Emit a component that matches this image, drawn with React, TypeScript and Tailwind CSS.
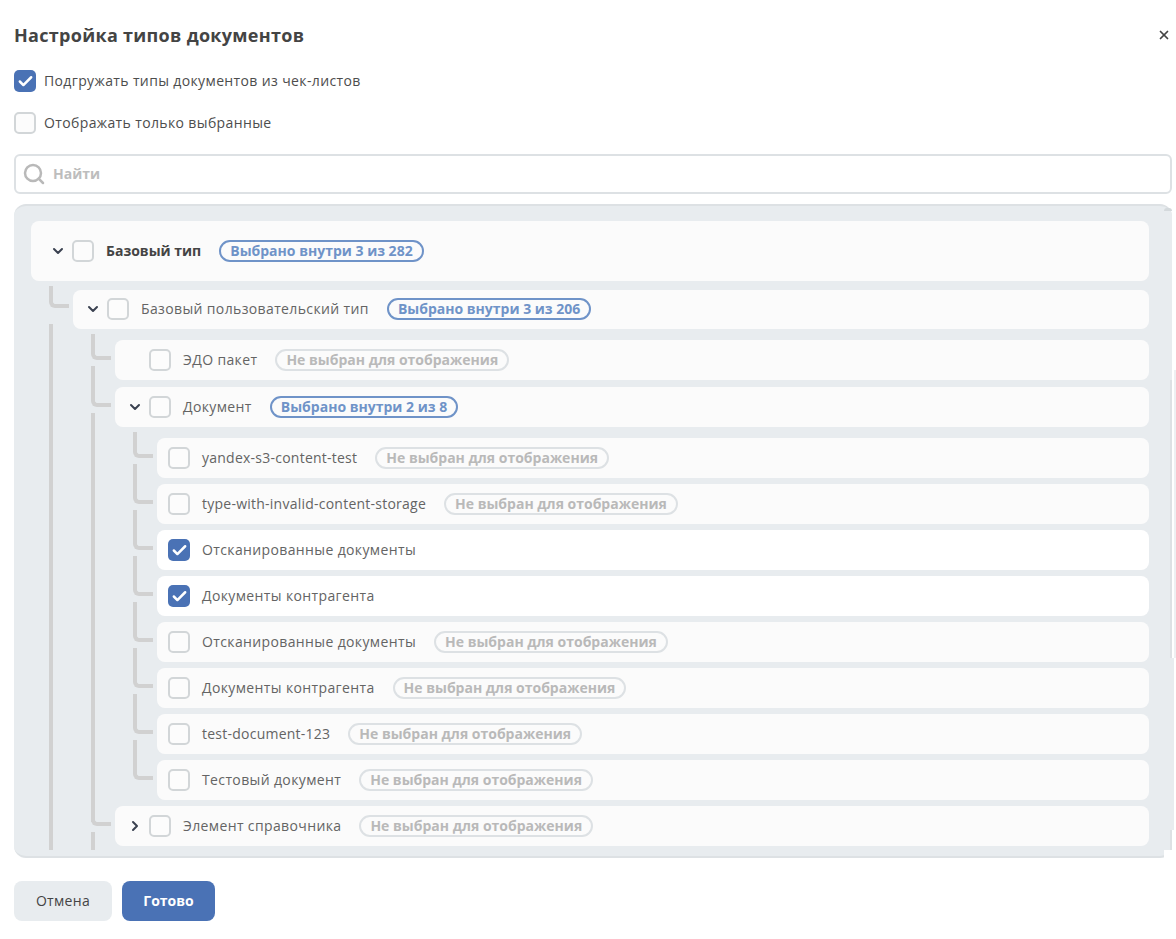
import { Check, ChevronDown, ChevronRight, Search, X } from 'lucide-react'
import type { ReactNode } from 'react'

const Sans = '[font-family:"Open_Sans","Noto_Sans",sans-serif]'

function Box({ checked = false }: { checked?: boolean }) {
  if (checked) {
    return (
      <span className="flex size-[22px] shrink-0 items-center justify-center rounded-[5px] bg-[#4a72b5] text-white">
        <Check className="size-[17px]" strokeWidth={3.5} />
      </span>
    )
  }
  return <span className="size-[22px] shrink-0 rounded-[5px] border-2 border-[#d2d6d8] bg-[#fcfcfc]" />
}

function Badge({ selected, children }: { selected?: boolean; children: ReactNode }) {
  return (
    <span
      className={
        selected
          ? 'ml-[18px] flex h-[22px] items-center rounded-full border-2 border-[#6f93c8] px-[9px] text-sm font-bold text-[#6f93c8]'
          : 'ml-[18px] flex h-[22px] items-center rounded-full border-2 border-[#dde1e4] px-[9px] text-sm font-bold text-[#b9b9b9]'
      }
    >
      {children}
    </span>
  )
}

const NOT_SELECTED = 'Не выбран для отображения'

interface RowProps {
  label: string
  badge?: string
  checked?: boolean
  toggle?: 'open' | 'closed'
  className: string
  elbow?: string
}

// className carries the height as well: the first nested row is a pixel shorter
function Row({ label, badge, checked, toggle, className, elbow }: RowProps) {
  const latin = /[a-z]/.test(label)
  return (
    <div className={`relative flex items-center rounded-lg ${checked ? 'bg-white' : 'bg-[#fbfbfb]'} ${className}`}>
      {elbow && <span className={`absolute -left-6 w-5 rounded-bl-md border-b-4 border-l-4 border-[#d1d1d1] ${elbow}`} />}
      {toggle === 'open' && <ChevronDown className="absolute left-3 size-4 text-[#3a4150]" strokeWidth={3} />}
      {toggle === 'closed' && <ChevronRight className="absolute left-3 size-4 text-[#3a4150]" strokeWidth={3} />}
      <Box checked={checked} />
      <span className={latin ? 'ml-3 text-sm tracking-[0.24px] text-[#646464]' : 'ml-3 text-sm tracking-[0.37px] text-[#646464]'}>
        {label}
      </span>
      {badge && <Badge selected={badge.startsWith('Выбрано')}>{badge}</Badge>}
    </div>
  )
}

export default function App() {
  const leaves: { label: string; checked?: boolean }[] = [
    { label: 'yandex-s3-content-test' },
    { label: 'type-with-invalid-content-storage' },
    { label: 'Отсканированные документы', checked: true },
    { label: 'Документы контрагента', checked: true },
    { label: 'Отсканированные документы' },
    { label: 'Документы контрагента' },
    { label: 'test-document-123' },
    { label: 'Тестовый документ' },
  ]

  return (
    <div className={`h-[939px] w-[1176px] overflow-hidden bg-white ${Sans}`}>
      <div className="flex h-[70px] items-center justify-between pl-[14px] pr-[5px]">
        <h1 className="text-lg font-bold tracking-[0.3px] text-[#444444]">Настройка типов документов</h1>
        <X className="size-[14px] text-[#444444]" strokeWidth={3} />
      </div>

      <label className="ml-[14px] flex h-[22px] items-center gap-2">
        <Box checked />
        <span className="text-sm tracking-[0.37px] text-[#4d4d4d]">Подгружать типы документов из чек-листов</span>
      </label>
      <label className="ml-[14px] mt-5 flex h-[22px] items-center gap-2">
        <Box />
        <span className="text-sm tracking-[0.37px] text-[#4d4d4d]">Отображать только выбранные</span>
      </label>

      <div className="mx-[14px] mt-5 mr-1 flex h-10 items-center gap-[7px] rounded-md border-2 border-[#dde1e4] pl-[6px]">
        <Search className="size-6 text-[#b9b9b9]" strokeWidth={2.5} />
        <span className="text-sm font-bold text-[#bdbdbd]">Найти</span>
      </div>

      <div className="relative ml-[14px] mt-[10px] w-[1158px] rounded-xl border-y-2 border-[#dde1e4] bg-[#e8ecef] pb-[6px] pt-[15px]">
        <div className="h-[629px] overflow-hidden pl-[17px] pr-[23px]">
          <div className="flex h-[60px] items-center rounded-lg bg-[#fbfbfb] pl-[41px]">
            <span className="relative flex shrink-0">
              <ChevronDown className="absolute -left-[22px] top-[3px] size-4 text-[#3a4150]" strokeWidth={3} />
              <Box />
            </span>
            <span className="ml-3 text-sm font-bold text-[#444444]">Базовый тип</span>
            <Badge selected>Выбрано внутри 3 из 282</Badge>
          </div>

          <div className="relative ml-[42px]">
            <span className="absolute -left-6 top-[34px] h-[560px] w-1 bg-[#d1d1d1]" />
            <Row
              label="Базовый пользовательский тип"
              badge="Выбрано внутри 3 из 206"
              toggle="open"
              className="mt-[9px] h-[39px] pb-px pl-[34px]"
              elbow="-top-1 h-[22px]"
            />

            <div className="relative ml-[42px]">
              <span className="absolute -left-6 top-[73px] h-[409px] w-1 bg-[#d1d1d1]" />
              <span className="absolute -left-6 top-[492px] h-6 w-1 bg-[#d1d1d1]" />
              <Row
                label="ЭДО пакет"
                badge={NOT_SELECTED}
                className="mt-[11px] h-10 pl-[34px]"
                elbow="-top-[6px] h-[26px]"
              />
              <Row
                label="Документ"
                badge="Выбрано внутри 2 из 8"
                toggle="open"
                className="mt-[7px] h-10 pl-[34px]"
                elbow="-top-[21px] h-[41px]"
              />

              <div className="ml-[42px]">
                {leaves.map((leaf, i) => (
                  <Row
                    key={i}
                    label={leaf.label}
                    checked={leaf.checked}
                    badge={leaf.checked ? undefined : NOT_SELECTED}
                    className={i === 0 ? 'mt-[11px] h-10 pl-[11px]' : 'mt-[6px] h-10 pl-[11px]'}
                    elbow={i === 0 ? '-top-[6px] h-[26px]' : '-top-5 h-10'}
                  />
                ))}
              </div>

              <Row
                label="Элемент справочника"
                badge={NOT_SELECTED}
                toggle="closed"
                className="mt-[6px] h-10 pl-[34px]"
                elbow="-top-[14px] h-[34px]"
              />
            </div>
          </div>
        </div>

        {/* scrollbar remains along the right edge */}
        <span className="absolute right-0 top-[2px] h-[3px] w-2 rounded-t-sm bg-[#d4d9dc]" />
        <span className="absolute right-0 top-[174px] h-[278px] w-[2px] bg-[#dde1e4]" />
        <span className="absolute -right-1 top-[164px] h-[288px] w-[2px] bg-[#eef0f2]" />
        <span className="absolute -right-[2px] top-[452px] h-[172px] w-1 bg-[#e8ecef]" />
        <span className="absolute right-0 top-[624px] h-5 w-[2px] bg-[#dde1e4]" />
        <span className="absolute -bottom-[2px] right-0 h-2 w-2 bg-white" />
      </div>

      <div className="ml-[14px] mt-[23px] flex gap-[10px]">
        <button type="button" className="h-10 w-[98px] rounded-lg bg-[#e8ecef] text-sm tracking-[0.33px] text-[#444444]">
          Отмена
        </button>
        <button type="button" className="h-10 w-[93px] rounded-lg bg-[#4a72b5] text-sm font-bold text-white">
          Готово
        </button>
      </div>
    </div>
  )
}
